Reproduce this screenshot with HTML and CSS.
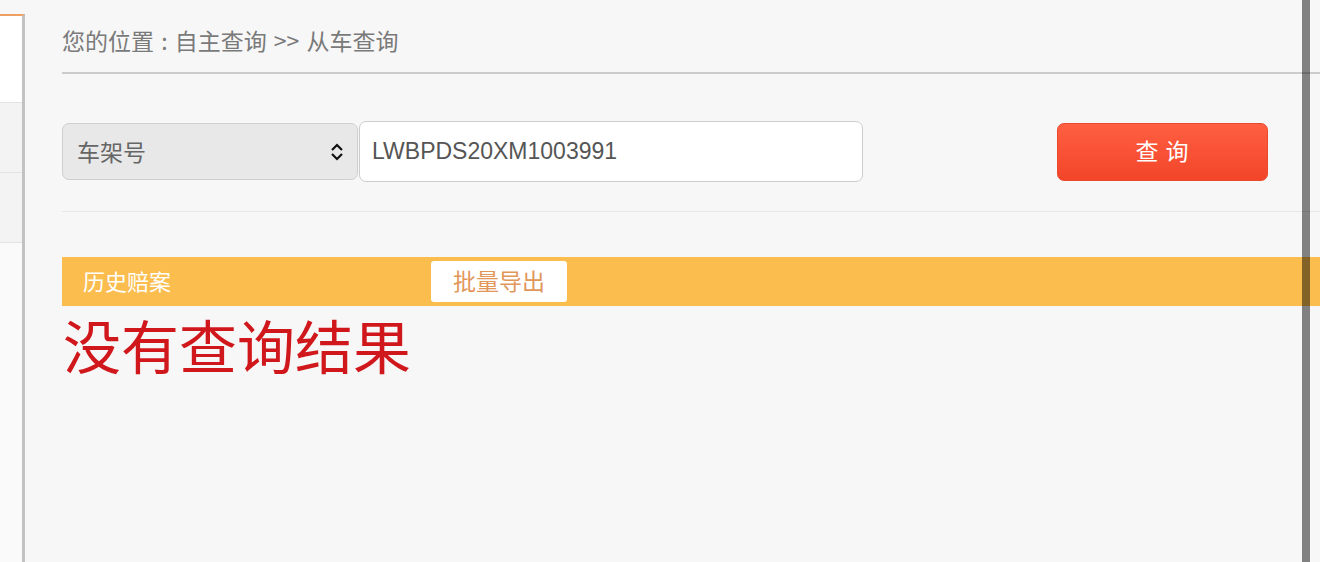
FILE: index.html
```html
<!DOCTYPE html>
<html lang="zh-CN">
<head>
  <meta charset="UTF-8">
  <title>从车查询</title>
  <link rel="stylesheet" href="styles.css">
</head>
<body>

  <div class="sidebar">
    <div class="side-item side-top"></div>
    <div class="side-item side-mid"></div>
    <div class="side-item side-mid"></div>
  </div>

  <div class="main">
    <div class="crumb">您的位置 : 自主查询 &gt;&gt; 从车查询</div>

    <div class="search-row">
      <div class="select-box">
        <span>车架号</span>
        <svg class="chevron" width="14" height="20" viewBox="0 0 14 20">
          <path d="M2 8 L7 3 L12 8" fill="none" stroke="#111" stroke-width="2.2"/>
          <path d="M2 12 L7 17 L12 12" fill="none" stroke="#111" stroke-width="2.2"/>
        </svg>
      </div>
      <input class="vin-input" type="text" value="LWBPDS20XM1003991">
      <button class="query-btn">查 询</button>
    </div>

    <div class="divider"></div>

    <div class="history-bar">
      <span class="history-title">历史赔案</span>
      <button class="export-btn">批量导出</button>
    </div>

    <p class="no-result">没有查询结果</p>
  </div>

  <div class="scroll-line"></div>

</body>
</html>
```

FILE: styles.css
```css
body {
  margin: 0;
  height: 562px;
  overflow: hidden;
  background-color: #f7f7f7;
  font-family: "Noto Sans CJK SC", "Liberation Sans", sans-serif;
  display: flex;
}

.sidebar {
  width: 22px;
  margin-top: 14px;
  border-top: 2px solid #f0a060;
  border-right: 3px solid #c2c2c2;
  background-color: #fafafa;
  display: flex;
  flex-direction: column;
  flex-shrink: 0;
}

.side-item {
  border-bottom: 1px solid #e2e2e2;
}

.side-top {
  height: 86px;
  background-color: #ffffff;
}

.side-mid {
  height: 69px;
  background-color: #f3f3f3;
}

.main {
  flex: 1;
  padding-left: 37px;
}

.crumb {
  padding: 26px 0 18px;
  line-height: 28px;
  font-size: 23px;
  word-spacing: 2px;
  color: #7a7a7a;
  border-bottom: 2px solid #cccccc;
}

.search-row {
  display: flex;
  align-items: center;
  height: 61px;
  margin-top: 47px;
  padding-right: 52px;
}

.select-box {
  width: 267px;
  height: 53px;
  padding: 0 13px 2px 14px;
  background-color: #e8e8e8;
  border: 1px solid #cfcfcf;
  border-radius: 7px;
  display: flex;
  align-items: center;
  justify-content: space-between;
  font-size: 23px;
  color: #666;
}

.chevron {
  display: block;
  margin-top: 2px;
}

.vin-input {
  width: 478px;
  height: 59px;
  margin: 0 0 0 1px;
  padding: 0 12px;
  border: 1px solid #cccccc;
  border-radius: 7px;
  background-color: #fff;
  font-family: "Liberation Sans", sans-serif;
  font-size: 23px;
  color: #555;
  outline: none;
}

.query-btn {
  margin-left: auto;
  width: 211px;
  height: 58px;
  padding-bottom: 4px;
  border: 1px solid #ea4a2c;
  border-radius: 7px;
  background: linear-gradient(#ff5f42, #f2452a);
  color: #fff;
  font-family: "Noto Sans CJK SC", sans-serif;
  font-size: 23px;
  letter-spacing: 1px;
  cursor: pointer;
}

.divider {
  margin-top: 29px;
  border-top: 1px solid #e6e6e6;
}

.history-bar {
  margin-top: 45px;
  height: 49px;
  background-color: #fbbd4e;
  display: flex;
  align-items: center;
  padding-left: 21px;
}

.history-title {
  width: 348px;
  margin-bottom: 4px;
  font-size: 22px;
  color: #fff;
}

.export-btn {
  width: 136px;
  height: 41px;
  padding-bottom: 5px;
  border: none;
  border-radius: 3px;
  background-color: #fff;
  color: #e2975a;
  font-family: "Noto Sans CJK SC", sans-serif;
  font-size: 23px;
}

.no-result {
  margin: 2px 0 0 1px;
  font-size: 58px;
  line-height: 72px;
  color: #d0181c;
}

.scroll-line {
  position: absolute;
  top: 0;
  left: 1302px;
  width: 8px;
  height: 562px;
  background-color: rgba(0, 0, 0, 0.48);
}
```
